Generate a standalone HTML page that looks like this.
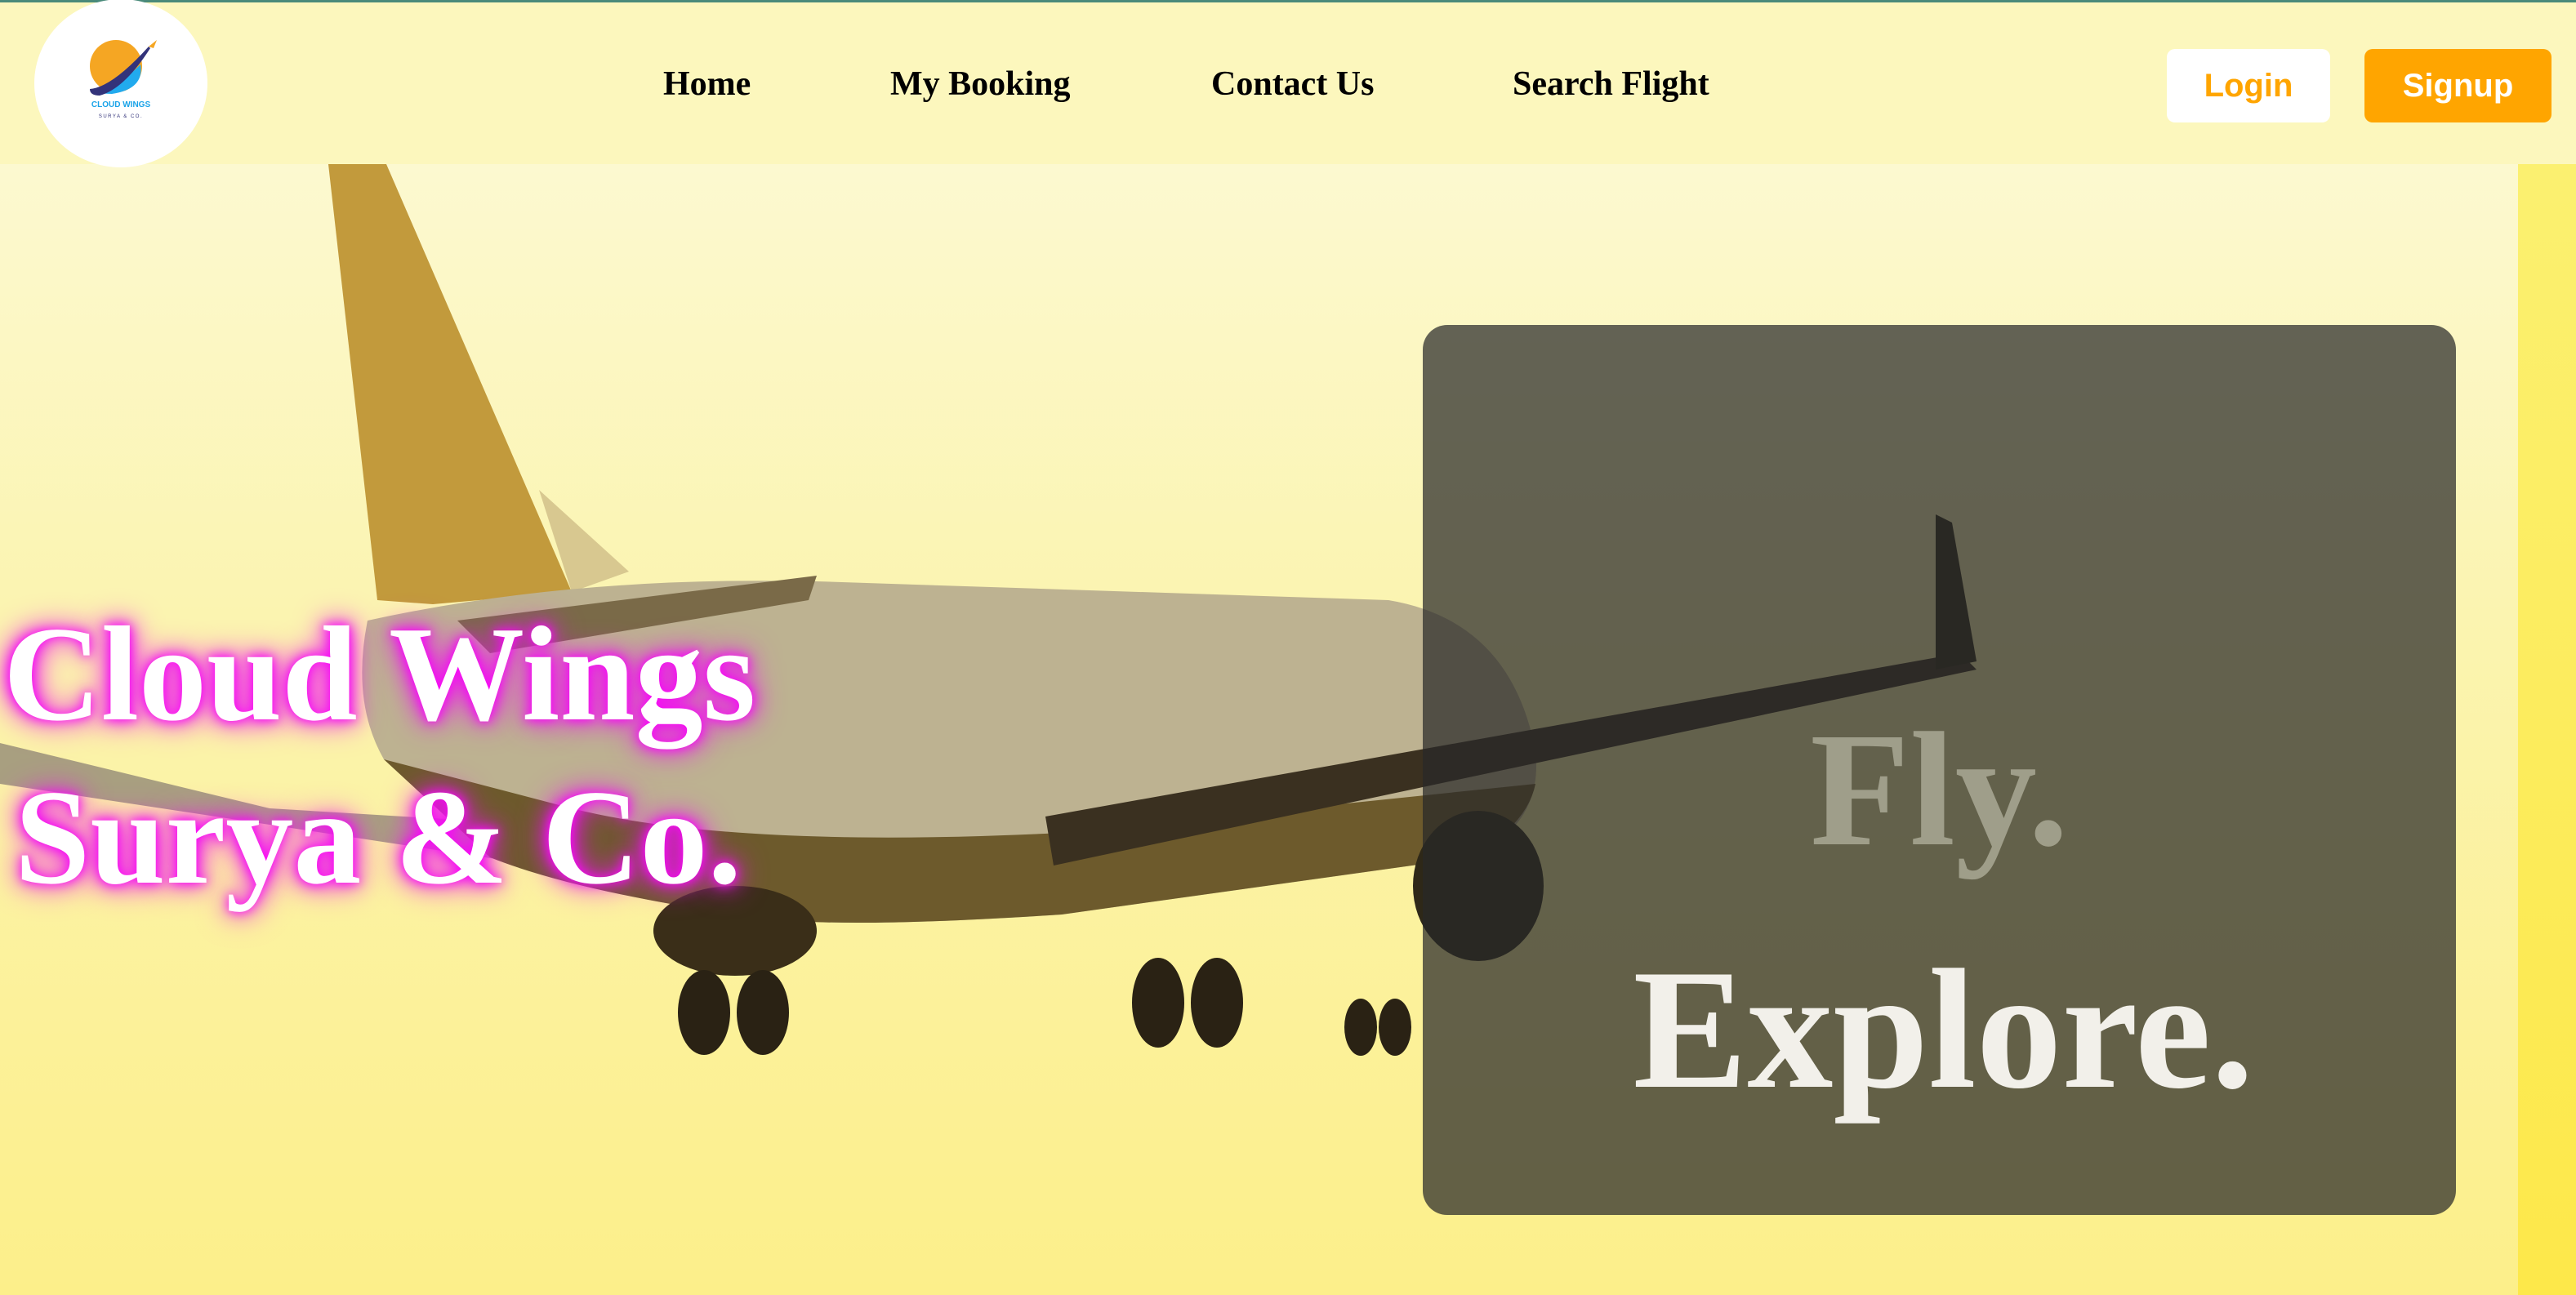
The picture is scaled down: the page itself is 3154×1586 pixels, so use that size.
<!DOCTYPE html>
<html><head><meta charset="utf-8"><style>
*{margin:0;padding:0;box-sizing:border-box}
body{width:3154px;height:1586px;overflow:hidden;position:relative;background:#fcf7bd;font-family:"Liberation Serif",serif}
.hdr{position:absolute;left:0;top:0;width:3154px;height:201px;background:#fcf7bd;border-top:3px solid #4a8a7a;z-index:5}
.logo{position:absolute;left:42px;top:-4px;width:212px;height:206px;border-radius:50%;background:#fff}
.nav{position:absolute;top:75px;font-weight:bold;font-size:42px;line-height:50px;color:#000;white-space:nowrap}
.btn{position:absolute;top:57px;height:90px;border-radius:10px;font-family:"Liberation Sans",sans-serif;font-weight:bold;font-size:40px;line-height:90px;text-align:center}
.hero{position:absolute;left:0;top:201px;width:3083px;height:1385px;background:linear-gradient(180deg,#fcf9d0 0%,#fbf4b0 40%,#fcef8a 100%)}
.strip{position:absolute;left:3083px;top:201px;width:71px;height:1385px;background:linear-gradient(180deg,#fbf070,#fde84a)}
.title{position:absolute;left:4px;top:725px;color:#fff;font-weight:bold;font-size:166px;line-height:200px;text-shadow:0 0 12px #f0f,0 0 24px #e020e0,0 0 40px #f0f;z-index:3;white-space:nowrap}
.box{position:absolute;left:1742px;top:398px;width:1265px;height:1090px;border-radius:30px;background:rgba(40,40,40,0.72);z-index:2}
.fly{position:absolute;left:0;width:100%;text-align:center;font-weight:bold;white-space:nowrap}
</style></head><body>
<div class="hero"></div>
<div class="strip"></div>
<svg style="position:absolute;left:0;top:0" width="3083" height="1586" viewBox="0 0 3083 1586">
<polygon points="0,910 330,990 660,1010 660,1060 0,960" fill="#a89f80"/>
<polygon points="402,201 473,201 700,725 530,740 462,735" fill="#c29a3c"/>
<polygon points="660,600 770,700 700,725" fill="#d8c890"/>
<path d="M450,760 Q700,705 1000,712 L1700,735 Q1850,760 1880,920 Q1890,1010 1800,1050 L1300,1120 Q1000,1140 900,1120 Q700,1090 600,1050 L470,930 Q430,860 450,760 Z" fill="#bdb291"/>
<path d="M470,930 L600,1050 Q700,1090 900,1120 Q1000,1140 1300,1120 L1800,1050 Q1870,1010 1880,960 L1300,1020 Q900,1040 700,990 Z" fill="#6d5a2c"/>
<polygon points="560,760 1000,705 990,735 600,800" fill="#7a6a48"/>
<polygon points="1280,1000 2400,800 2420,820 1290,1060" fill="#3a3020"/>
<polygon points="2370,630 2390,640 2420,810 2370,820" fill="#2e2818"/>
<ellipse cx="1810" cy="1085" rx="80" ry="92" fill="#2e2818"/>
<ellipse cx="900" cy="1140" rx="100" ry="55" fill="#3a2e18"/>
<g fill="#2a2214">
<ellipse cx="862" cy="1240" rx="32" ry="52"/><ellipse cx="934" cy="1240" rx="32" ry="52"/>
<ellipse cx="1418" cy="1228" rx="32" ry="55"/><ellipse cx="1490" cy="1228" rx="32" ry="55"/>
<ellipse cx="1666" cy="1258" rx="20" ry="35"/><ellipse cx="1708" cy="1258" rx="20" ry="35"/>
</g>
</svg>
<div class="box">
<div class="fly" style="top:450px;font-size:200px;line-height:240px;color:rgba(200,198,180,0.6)">Fly.</div>
<div class="fly" style="top:738px;font-size:210px;line-height:250px;color:#f2f0ea;padding-left:10px">Explore.</div>
</div>
<div class="title">Cloud Wings<br><span style="padding-left:14px">Surya &amp; Co.</span></div>
<div class="hdr">
<div class="logo">
<svg width="212" height="206" viewBox="0 0 212 206">
<circle cx="100" cy="82" r="32" fill="#f5a623"/>
<path d="M70,115 Q100,110 130,80 Q135,110 95,116 Z" fill="#22aaee"/>
<path d="M68,110 Q95,108 140,58 L142,60 Q110,110 80,118 Q68,118 68,110 Z" fill="#33337a"/>
<path d="M140,58 L150,50 L146,60 Z" fill="#f5a623"/>
<text x="106" y="132" text-anchor="middle" font-family="Liberation Sans" font-weight="bold" font-size="10" fill="#1aa3e8">CLOUD WINGS</text>
<text x="106" y="145" text-anchor="middle" font-family="Liberation Sans" font-size="6" letter-spacing="1.5" fill="#33337a">SURYA &amp; CO.</text>
</svg>
</div>
<div class="nav" style="left:812px">Home</div>
<div class="nav" style="left:1090px">My Booking</div>
<div class="nav" style="left:1483px">Contact Us</div>
<div class="nav" style="left:1852px">Search Flight</div>
<div class="btn" style="left:2653px;width:200px;background:#fff;color:#ffa500">Login</div>
<div class="btn" style="left:2895px;width:229px;background:#ffa500;color:#fff">Signup</div>
</div>
</body></html>
